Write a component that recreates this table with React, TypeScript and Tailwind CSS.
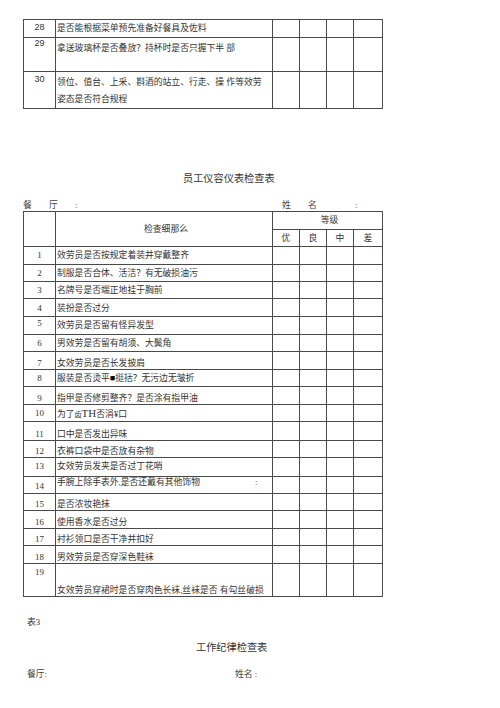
import React from 'react';

type Row = {
  h: number;
  num: string;
  text: React.ReactNode;
  np: number; // number padding-top
  tp: number; // text padding-top
};

const cjk = { fontFamily: '"Liberation Serif", "Noto Sans CJK SC", serif' };
const sans = { fontFamily: '"Liberation Sans", "Noto Sans CJK SC", sans-serif' };

const topRows: Row[] = [
  { h: 18, num: '28', text: '是否能根据菜单预先准备好餐具及佐料', np: 2, tp: 3 },
  { h: 34, num: '29', text: '拿送玻璃杯是否叠放？持杯时是否只握下半 部', np: 0, tp: 5 },
  {
    h: 35,
    num: '30',
    text: (
      <span className="block leading-[17px] -mt-[3px]">
        领位、值台、上采、斟酒的站立、行走、操 作等效劳
        <br />
        姿态是否符合规程
      </span>
    ),
    np: 2,
    tp: 5,
  },
];

const rows: Row[] = [
  { h: 18, num: '1', text: '效劳员是否按规定着装并穿戴整齐', np: 3, tp: 3 },
  { h: 17, num: '2', text: '制服是否合体、活洁？有无破损油污', np: 3, tp: 3 },
  { h: 17, num: '3', text: '名牌号是否端正地挂于胸前', np: 3, tp: 3 },
  { h: 18, num: '4', text: '装扮是否过分', np: 4, tp: 4 },
  { h: 18, num: '5', text: '效劳员是否留有怪异发型', np: 1, tp: 3 },
  { h: 17, num: '6', text: '男效劳是否留有胡须、大鬓角', np: 3, tp: 3 },
  { h: 18, num: '7', text: '女效劳员是否长发披肩', np: 6, tp: 6 },
  { h: 17, num: '8', text: <>服装是否烫平<span className="text-black">■</span>挺括？无污边无皱折</>, np: 3, tp: 3 },
  { h: 18, num: '9', text: '指甲是否修剪整齐？是否涂有指甲油', np: 6, tp: 6 },
  {
    h: 17,
    num: '10',
    text: (
      <>
        为了<span className="text-[7px]">齿</span>
        <span className="text-[11px]" style={{ fontFamily: '"Liberation Serif", serif' }}>TH</span>
        否涓¥口
      </>
    ),
    np: 3,
    tp: 3,
  },
  { h: 18, num: '11', text: '口中是否发出异味', np: 7, tp: 7 },
  { h: 17, num: '12', text: '衣裤口袋中是否放有杂物', np: 5, tp: 5 },
  { h: 19, num: '13', text: '女效劳员发夹是否过丁花哨', np: 3, tp: 3 },
  {
    h: 17,
    num: '14',
    text: (
      <span className="flex">
        <span className="w-[198px]">手腕上除手表外,是否还戴有其他饰物</span>
        <span>:</span>
      </span>
    ),
    np: 4,
    tp: 0,
  },
  { h: 17, num: '15', text: '是否浓妆艳抹', np: 5, tp: 5 },
  { h: 18, num: '16', text: '使用香水是否过分', np: 6, tp: 6 },
  { h: 17, num: '17', text: '衬衫领口是否干净并扣好', np: 5, tp: 5 },
  { h: 18, num: '18', text: '男效劳员是否穿深色鞋袜', np: 6, tp: 6 },
  { h: 33, num: '19', text: '女效劳员穿裙时是否穿肉色长袜,丝袜是否 有勾丝破损', np: 3, tp: 21 },
];

const line = 'border border-[#4a4a4a] p-0';
const cell = `${line} align-top`;

function Cols() {
  return (
    <colgroup>
      <col className="w-[32px]" />
      <col className="w-[217px]" />
      <col className="w-[27px]" />
      <col className="w-[27px]" />
      <col className="w-[27px]" />
      <col className="w-[29px]" />
    </colgroup>
  );
}

function BodyRow({ r, numFont }: { r: Row; numFont: React.CSSProperties }) {
  return (
    <tr style={{ height: r.h }}>
      <td className={cell}>
        <div className="text-center text-[9px] leading-[11px] text-[#333]" style={{ ...numFont, paddingTop: r.np }}>
          {r.num}
        </div>
      </td>
      <td className={cell}>
        <div className="pl-[1px] text-[8.8px] leading-[11px] whitespace-nowrap text-[#333]" style={{ ...cjk, paddingTop: r.tp }}>
          {r.text}
        </div>
      </td>
      <td className={cell} />
      <td className={cell} />
      <td className={cell} />
      <td className={cell} />
    </tr>
  );
}

export default function App() {
  return (
    <div className="w-[500px] h-[708px] bg-white overflow-hidden text-[#333]" style={cjk}>
      <div className="pt-[19px] pl-[23px]">
        <table className="table-fixed border-collapse w-[359px]">
          <Cols />
          <tbody>
            {topRows.map((r) => (
              <BodyRow key={r.num} r={r} numFont={sans} />
            ))}
          </tbody>
        </table>
      </div>

      <div className="mt-[64px] pl-[183px] text-[10.2px] leading-[12px] h-[12px]">员工仪容仪表检查表</div>

      <div className="mt-[15px] pl-[23px] flex text-[8.8px] leading-[11px] h-[11px] text-[#444]">
        <span className="w-[26px]">餐</span>
        <span className="w-[26px]">厅</span>
        <span className="w-[207px]">:</span>
        <span className="w-[26px]">姓</span>
        <span className="w-[47px]">名</span>
        <span>:</span>
      </div>

      <div className="pl-[23px]">
        <table className="table-fixed border-collapse w-[359px]">
          <Cols />
          <tbody>
            <tr className="h-[18px]">
              <td className={cell} rowSpan={2} />
              <td className={`${line} align-middle`} rowSpan={2}>
                <div className="text-center text-[8.8px] leading-[11px] pl-[4px]">检查细那么</div>
              </td>
              <td className={cell} colSpan={4}>
                <div className="text-center text-[8.8px] leading-[11px] pt-[3px] pl-[4px]">等级</div>
              </td>
            </tr>
            <tr className="h-[17px]">
              {['优', '良', '中', '差'].map((g) => (
                <td key={g} className={cell}>
                  <div className="text-center text-[8.8px] leading-[11px] pt-[3px]">{g}</div>
                </td>
              ))}
            </tr>
            {rows.map((r) => (
              <BodyRow key={r.num} r={r} numFont={cjk} />
            ))}
          </tbody>
        </table>
      </div>

      <div className="mt-[20px] pl-[27px] text-[8.8px] leading-[11px] h-[11px]">表3</div>

      <div className="mt-[14px] pl-[196px] text-[10.2px] leading-[12px] h-[12px]">工作纪律检查表</div>

      <div className="mt-[15px] pl-[27px] flex text-[8.8px] leading-[11px] h-[11px] text-[#444]">
        <span className="w-[208px]">餐厅:</span>
        <span>姓名 :</span>
      </div>
    </div>
  );
}
